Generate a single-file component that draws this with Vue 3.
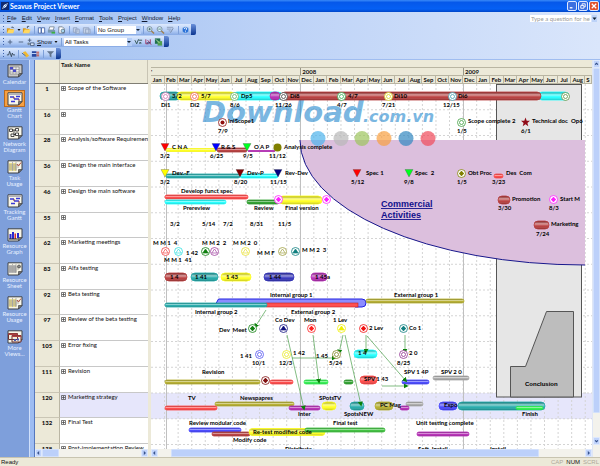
<script setup>
const menus = ['File', 'Edit', 'View', 'Insert', 'Format', 'Tools', 'Project', 'Window', 'Help']

const views = [
  { lines: ['Calendar'], kind: 'calendar' },
  { lines: ['Gantt', 'Chart'], kind: 'gantt', active: true },
  { lines: ['Network', 'Diagram'], kind: 'network' },
  { lines: ['Task', 'Usage'], kind: 'usage' },
  { lines: ['Tracking', 'Gantt'], kind: 'gantt' },
  { lines: ['Resource', 'Graph'], kind: 'graph' },
  { lines: ['Resource', 'Sheet'], kind: 'sheet' },
  { lines: ['Resource', 'Usage'], kind: 'usage' },
  { lines: ['More', 'Views...'], kind: 'more' },
]

const tasks = [
  [1, 'Scope of the Software'],
  [16, ''],
  [28, 'Analysis/software Requirement'],
  [36, 'Design the main interface'],
  [46, 'Design the main software'],
  [55, ''],
  [62, 'Marketing meetings'],
  [83, 'Alfa testing'],
  [92, 'Beta testing'],
  [97, 'Review of the beta testing'],
  [105, 'Error fixing'],
  [111, 'Revision'],
  [120, 'Marketing strategy'],
  [132, 'Final Test'],
  [138, 'Post-implementation Review'],
]

const names = ['Jan', 'Feb', 'Mar', 'Apr', 'May', 'Jun', 'Jul', 'Aug', 'Sep', 'Oct', 'Nov', 'Dec']
const months = Array.from({ length: 32 }, (_, i) => names[i % 12])
const monthLines = Array.from({ length: 32 }, (_, i) => 151 + (i + 1) * 13.57)
const rowLines = Array.from({ length: 14 }, (_, i) => 84 + (i + 1) * 25.75)

const C = {
  teal: '#22aaaa', yellow: '#ffff20', cyan: '#20ffff', brown: '#b83c3c', purple: '#b52cb5',
  red: '#ff4646', green: '#2ba02b', lime: '#30f050', olive: '#b5ae2d', blue: '#4545ff',
  navy: '#3434bc', grey: '#aaaaaa', mid: '#3cc03c',
}
// left, right, centre line, thickness, colour
const bars = [
  [160, 180, 96, 8, 'teal'], [177, 235, 96, 8, 'yellow'], [233, 282, 96, 8, 'cyan'],
  [538, 569, 96, 8, 'cyan'], [281, 541, 96, 8, 'brown'], [270, 280, 96, 8, 'purple'],
  [166, 216, 150, 3, 'yellow'], [217, 247, 150, 4, 'brown'], [248, 275, 151, 1, 'purple'],
  [166, 240, 176, 4, 'teal'], [240, 278, 176, 4, 'cyan'], [494, 503, 176, 4, 'red'],
  [165, 248, 197, 4, 'red'], [165, 226, 202, 4, 'cyan'], [247, 279, 202, 4, 'green'],
  [279, 322, 200, 8, 'yellow'], [498, 510, 200, 8, 'brown'], [534, 549, 225, 8, 'brown'],
  [165, 187, 277, 8, 'brown'], [191, 218, 277, 8, 'teal'], [221, 251, 277, 8, 'yellow'],
  [264, 294, 277, 8, 'navy'], [311, 327, 277, 8, 'purple'],
  [165, 267, 305, 4, 'teal'], [366, 464, 301, 4, 'olive'],
  [354, 377, 354, 8, 'cyan'],
  [165, 260, 382, 4, 'olive'], [270, 293, 382, 4, 'red'], [304, 328, 382, 4, 'lime'],
  [344, 353, 382, 4, 'green'], [360, 377, 380, 8, 'red'], [402, 429, 382, 4, 'blue'],
  [433, 469, 378, 4, 'grey'],
  [215, 294, 404, 4, 'olive'], [165, 217, 408, 4, 'red'], [289, 320, 408, 4, 'purple'],
  [322, 336, 406, 8, 'yellow'], [350, 364, 406, 8, 'teal'], [375, 393, 406, 8, 'olive'],
  [406, 423, 404, 4, 'grey'], [400, 409, 408, 4, 'purple'], [439, 457, 406, 8, 'blue'],
  [458, 545, 406, 8, 'teal'], [516, 543, 408, 3, 'lime'],
  [189, 241, 430, 4, 'blue'], [212, 250, 434, 4, 'brown'], [249, 325, 432, 7, 'yellow'],
  [305, 385, 430, 4, 'mid'], [417, 469, 434, 4, 'purple'],
]

// centre x, centre y, colour, inner shape
const rings = [
  [165, 96, '#d070b0', 'ring'], [194, 96, '#f06050', 'ring'], [234, 96, '#60b060', 'ring'],
  [283, 96, '#404040', 'ring'], [341, 96, '#30b050', 'ring'], [388, 96, '#d8d820', 'ring'],
  [452, 96, '#40a0b0', 'ring'], [565, 96, '#609040', 'ring'],
  [222, 122, '#901010', 'dot'], [461, 122, '#40a040', 'ring'], [461, 173, '#808000', 'plus'],
  [278, 199, '#ff20ff', 'plus'], [326, 199, '#ff20ff', 'plus'], [553, 199, '#ff20ff', 'plus'],
  [165, 251, '#f04040', 'tri'], [178, 251, '#30e0e0', 'tri'], [205, 251, '#108010', 'solid'],
  [214, 251, '#a040a0', 'tri'], [245, 251, '#e8e030', 'tri'], [282, 251, '#a0a040', 'tri'],
  [295, 251, '#108080', 'solid'],
  [252, 328, '#108010', 'plus'], [283, 328, '#101080', 'solid'], [311, 328, '#ff2020', 'plus'],
  [341, 328, '#f0f000', 'solid'], [363, 328, '#f01010', 'plus'], [403, 328, '#108080', 'plus'],
  [259, 354, '#5050f0', 'ring'], [286, 354, '#e8e820', 'ring'], [336, 354, '#808020', 'ring'],
  [403, 354, '#903090', 'ring'], [265, 380, '#801010', 'plus'],
]

const triangles = [
  [165, 147, '#ff0000'], [216, 147, '#0000ff'], [247, 147, '#00ff20'],
  [165, 173, '#ffff00'], [240, 173, '#800000'], [278, 173, '#000080'],
  [357, 173, '#ff0000'], [409, 173, '#00ff20'],
]

const links = [
  [266, 310, 255, 327], [287, 335, 304, 409], [313, 335, 319, 382], [343, 335, 339, 353],
  [345, 335, 361, 405], [366, 335, 366, 352], [367, 336, 406, 381], [405, 335, 405, 352],
  [292, 358, 335, 358], [382, 386, 407, 386],
]

const labels = [
  [172, 98, '3/2'], [201, 98, '5/7'], [241, 98, 'Dp5'], [290, 98, 'Di8'], [348, 98, '4/7'], [394, 98, 'Di10'], [458, 98, 'Di6'],
  [161, 107, 'Di1'], [190, 107, 'Di2'], [230, 107, '8/6'], [275, 107, '11/26'], [337, 107, '4/7'], [382, 107, '7/21'], [443, 107, '12/15'],
  [228, 123, 'IniScope1'], [218, 133, '7/9'], [468, 123, 'Scope complete 2'], [457, 133, '1/5'],
  [532, 123, 'Technical doc'], [571, 123, 'Op6'], [521, 133, '6/1'],
  [172, 149, 'C N A'], [221, 149, 'R & S'], [254, 149, 'O A P'], [284, 149, 'Analysis complete'],
  [160, 158, '3/2'], [210, 158, '6/25'], [243, 158, '9/5'], [269, 158, '11/12'],
  [172, 175, 'Dev.-F'], [247, 175, 'Dev-P'], [285, 175, 'Rev-Dev'],
  [160, 184, '3/2'], [234, 184, '8/20'], [270, 184, '11/15'],
  [366, 175, 'Spec 1'], [351, 184, '5/12'], [415, 175, 'Spec  2'], [404, 184, '9/8'],
  [468, 175, 'Obt Proc'], [506, 175, 'Des  Com'], [457, 184, '1/5'], [492, 184, '3/23'],
  [181, 193, 'Develop funct spec'], [183, 210, 'Prereview'], [254, 210, 'Review'], [285, 210, 'Final version'],
  [512, 201, 'Promotion'], [498, 210, '3/30'], [560, 201, 'Start M'], [549, 210, '8/3'],
  [170, 226, '3/2'], [202, 226, '5/14'], [223, 226, '7/2'], [250, 226, '8/31'], [278, 226, '11/5'],
  [551, 226, 'Marketing'], [536, 236, '7/24'],
  [153, 245, 'M M 1  4'], [202, 245, 'M M 2  2'], [233, 245, 'M M 2  0'], [186, 255, '1 42'],
  [257, 255, 'M M F'], [302, 252, 'M M 2  3'], [164, 262, 'M M 1  41'],
  [170, 279, '1 4'], [195, 279, '1 41'], [226, 279, '1 43'], [269, 279, '1 44'], [315, 279, '1 45a'],
  [270, 297, 'Internal group 1'], [394, 297, 'External group 1'], [195, 314, 'Internal group 2'], [291, 314, 'External group 2'],
  [219, 332, 'Dev  Meet'], [275, 322, 'Co Dev'], [304, 322, 'Mon'], [333, 322, '1 Lev'], [369, 330, '2 Lev'], [409, 330, 'Co 1'],
  [240, 358, '1 41'], [252, 365, '10/1'], [279, 365, '12/3'], [293, 355, '1 42'], [316, 358, '1 45'], [329, 365, '5/24'],
  [358, 355, '1 4'], [409, 355, '2 0'], [397, 365, '8/25'],
  [202, 374, 'Revision'], [364, 381, 'SPV 1 43'], [404, 374, 'SPV 1 4P'], [441, 374, 'SPV 2 0'],
  [188, 400, 'TV'], [240, 400, 'Newspapres'], [298, 416, 'Inter'], [319, 400, 'SPotsTV'], [344, 416, 'SpotsNEW'],
  [380, 407, 'PC Mag'], [444, 407, 'Expo'], [522, 416, 'Finish'],
  [189, 425, 'Review modular code'], [253, 434, 'Re-test modified code'], [233, 442, 'Modify code'],
  [333, 425, 'Final test'], [416, 425, 'Unit testing complete'],
  [285, 451, 'Distribute'], [418, 451, 'Soft. Install'], [490, 451, 'Install'],
]

const dots = [
  [318, '#4db4ec'], [341, '#b8b8b8'], [362, '#9cc45c'], [384, '#f8a040'], [406, '#3088c0'], [428, '#f04858'],
]
</script>

<template>
  <div class="window">
    <header class="titlebar">
      <svg class="app-icon" viewBox="0 0 8 8" aria-hidden="true"><rect width="8" height="8" fill="#102a70" /><path d="M1 7 3 3 7 1 5 5Z" fill="#fff" /><path d="M2 6 6 2" stroke="#6fa0e0" /></svg>
      <h1>Seavus Project Viewer</h1>
      <button class="win" aria-label="Minimize"><svg viewBox="0 0 9 9"><path d="M2 6.5h3" stroke="#fff" stroke-width="1.5" /></svg></button>
      <button class="win" aria-label="Restore"><svg viewBox="0 0 9 9"><path d="M2 4h3.500v3H2zM3.500 4V2H7v3.500H5.500" fill="none" stroke="#fff" /></svg></button>
      <button class="win close" aria-label="Close"><svg viewBox="0 0 9 9"><path d="m2 2 5 5M7 2 2 7" stroke="#fff" stroke-width="1.400" /></svg></button>
    </header>

    <div class="bars">
      <nav class="menubar">
        <i class="grip"></i>
        <button v-for="m in menus" :key="m" class="menu"><u>{{ m[0] }}</u>{{ m.slice(1) }}</button>
        <span class="ask">
          <input class="help" aria-label="Type a question for help" placeholder="Type a question for help" />
          <button class="help-arrow" aria-label="Help list"><svg viewBox="0 0 5 7"><path d="M.5 2.500h4L2.500 5z" fill="#123" /></svg></button>
        </span>
      </nav>

      <div class="toolbar">
        <i class="grip"></i>
        <button class="tool" aria-label="Open"><svg viewBox="0 0 10 10"><path d="M1 8V3h3l1 1h3v4z" fill="#d89a20" /><path d="m1 8.500 2-4h6.500L8 8.500z" fill="#ffd860" /><path d="M6 2q2-1 2.500 1" fill="none" stroke="#345" /></svg></button>
        <button class="caret" aria-label="Open list"><svg viewBox="0 0 6 10"><path d="M1.500 4h3L3 6z" fill="#111" /></svg></button>
        <button class="tool" aria-label="Open folder"><svg viewBox="0 0 10 10"><path d="M1 8V3h3l1 1h3v4z" fill="#d89a20" /><path d="m1 8.500 2-4h6.500L8 8.500z" fill="#ffd860" /><path d="M6 3V1h2" fill="none" stroke="#456" /></svg></button>
        <i class="sep"></i>
        <button class="tool" aria-label="Pages"><svg viewBox="0 0 10 10"><path d="M1.500 2.500h3v6h-3zM5 2.500h3.500v6H5z" fill="#fff" stroke="#4868a8" /></svg></button>
        <button class="tool" aria-label="Print"><svg viewBox="0 0 10 10"><path d="M3 1.500h5L7 5H2z" fill="#fff" stroke="#567" stroke-width=".7" /><path d="M1 5h8v3H1z" fill="#7898b0" /><path d="M5 7h4v2H5z" fill="#3cb040" /></svg></button>
        <button class="tool" aria-label="Print preview"><svg viewBox="0 0 10 10"><path d="M2 1.500h4l2 2v5H2z" fill="#fff" stroke="#456" stroke-width=".7" /><circle cx="6.500" cy="6" r="2" fill="#a8d8f0" stroke="#456" stroke-width=".7" /></svg></button>
        <i class="sep"></i>
        <button class="tool" aria-label="Copy"><svg viewBox="0 0 10 10"><path d="M1.500 2.500h4v5h-4zM4 4h4v5H4z" fill="#c5d3e8" stroke="#94a5c4" /></svg></button>
        <button class="tool" aria-label="Paste"><svg viewBox="0 0 10 10"><path d="M1.500 2.500h6v6h-6zM4 4h5v5H4z" fill="#c5d3e8" stroke="#94a5c4" /></svg></button>
        <i class="sep"></i>
        <span class="combo group"><select aria-label="Group by"><option>No Group</option></select></span>
        <i class="sep"></i>
        <button class="tool" aria-label="Zoom in"><svg viewBox="0 0 10 10"><circle cx="4" cy="4" r="2.700" fill="#dff" stroke="#789" /><path d="m6 6 3 3" stroke="#a08050" stroke-width="1.500" /><path d="M2.500 4h3M4 2.500v3" stroke="#234" stroke-width=".7" /></svg></button>
        <button class="tool" aria-label="Zoom out"><svg viewBox="0 0 10 10"><circle cx="4" cy="4" r="2.700" fill="#dff" stroke="#789" /><path d="m6 6 3 3" stroke="#a08050" stroke-width="1.500" /><path d="M2.500 4h3" stroke="#234" stroke-width=".7" /></svg></button>
        <button class="tool" aria-label="Go to task"><svg viewBox="0 0 10 10"><path d="M1 2h7M1 4h5M3 6h2" stroke="#8a9ab5" /><path d="m8 3-3 5" stroke="#74859f" /></svg></button>
        <i class="sep"></i>
        <button class="tool" aria-label="Help"><svg viewBox="0 0 10 10"><circle cx="5" cy="5" r="3.700" fill="#2870d8" stroke="#cde" stroke-width=".6" /><path d="M3.700 4q0-1.500 1.500-1.500T6 4.500L5 5.500M5 6.500v1" fill="none" stroke="#fff" /></svg></button>
        <i class="cap"></i>
      </div>

      <div class="toolbar">
        <i class="grip"></i>
        <button class="tool" aria-label="Expand"><svg viewBox="0 0 10 10"><path d="M2 5h5M4.500 2.500v5" stroke="#4c6080" /></svg></button>
        <button class="tool" aria-label="Collapse"><svg viewBox="0 0 10 10"><path d="M3 5h5" stroke="#4c6080" /></svg></button>
        <button class="tool" aria-label="Subtasks"><svg viewBox="0 0 10 10"><path d="M2 3h4M4 1v4M5 6h4v3H5z" stroke="#4c6080" fill="#dce8f8" /><circle cx="3" cy="7" r="1.500" fill="#789" /></svg></button>
        <button class="menu show"><u>S</u>how</button>
        <button class="caret" aria-label="Show list"><svg viewBox="0 0 6 10"><path d="M1.500 4h3L3 6z" fill="#111" /></svg></button>
        <i class="sep"></i>
        <span class="combo filter"><select aria-label="Filter"><option>All Tasks</option></select></span>
        <button class="tool" aria-label="Auto filter"><svg viewBox="0 0 10 10"><path d="m1 3 2 4 2-5M5 3h4M6 5l2 2M8 5 6 7" fill="none" stroke="#2e5050" /></svg></button>
        <button class="tool" aria-label="Sort"><svg viewBox="0 0 10 10"><path d="M2 2v5h3M4 3l4 5M7 2v4" fill="none" stroke="#a03060" /><path d="M3 6h4" stroke="#225" /></svg></button>
        <button class="tool" aria-label="Export"><svg viewBox="0 0 10 10"><path d="M1 1h6v6H1z" fill="#207050" /><path d="M4 4h5v5H4z" fill="#50a050" /><path d="m2 2 4 4" stroke="#bfe0b0" /></svg></button>
        <i class="cap"></i>
      </div>

      <div class="toolbar">
        <i class="grip"></i>
        <button class="tool" aria-label="Activity"><svg viewBox="0 0 10 10"><path d="M1 6h2l1-4 2 6 1-4 1 2h2" fill="none" stroke="#345" /></svg></button>
        <i class="sep"></i>
        <button class="tool" aria-label="Highlight"><svg viewBox="0 0 10 10"><path d="m2 3 3-1 4 5-3 2z" fill="#f0b830" /><path d="M1 4 5 7" stroke="#406090" /></svg></button>
        <button class="tool" aria-label="Columns"><svg viewBox="0 0 10 10"><path d="M1 2h5v2H1zM1 5h5v3H1z" fill="#2848a0" /><path d="M6 3h3M6 5h3M6 7h3" stroke="#c83820" /></svg></button>
        <i class="sep"></i>
        <button class="tool" aria-label="Filter tasks"><svg viewBox="0 0 10 10"><path d="M1 2h8L6 5v4L4 7.500V5z" fill="#62748c" /></svg></button>
        <i class="cap"></i>
      </div>
    </div>

    <main class="work">
      <aside class="sidebar">
        <button v-for="(v, i) in views" :key="i" class="view">
          <span class="view-icon" :class="{ active: v.active }">
            <svg viewBox="0 0 16 14">
              <path d="M1 .8h14v8.700L11.500 13H1z" :fill="v.kind === 'calendar' ? '#c8c8c8' : '#f8f6e8'" stroke="#3c4048" />
              <path d="M15 9.500h-3.500V13z" fill="#777" stroke="#333" stroke-width=".6" />
              <g v-if="v.kind === 'calendar'"><path d="M3 3h9v7H3z" fill="#efefef" stroke="#777" stroke-width=".6" /><path d="M3 5.500h9M3 8h9M6 3v7M9 3v7" stroke="#888" stroke-width=".6" /><path d="M6 5.500h3V8H6zM3 3h3v2.500H3z" fill="#4848c8" /></g>
              <g v-else-if="v.kind === 'gantt'"><path d="M1.500 1.300h13V3h-13z" fill="#b0b0b8" /><path d="M3 5h4M7 7h5M4 9.500h4M9 4.500h4" stroke="#3838d8" stroke-width="1.500" /><path d="M7 5v2M12 7v2" stroke="#803040" /></g>
              <g v-else-if="v.kind === 'network'" fill="#fff" stroke="#222" stroke-width=".8"><path d="M2.500 3h3v2.500h-3zM8.500 2.500h3V5h-3zM8.500 7h3v2.500h-3zM4 8h3v2.500H4zM5.500 4h3M7 4v4.500h2" /></g>
              <g v-else-if="v.kind === 'graph'"><path d="M2.500 6h2v5h-2zM5 4h2v7H5zM10 5h2v5h-2z" fill="#2828d0" /><path d="M7.500 5.500H9V11H7.500z" fill="#d83030" /><path d="M2 11h9" stroke="#222" /></g>
              <g v-else-if="v.kind === 'more'"><path d="M1.500 3.500h9v6h-9zM5 5.500h9V12H5z" fill="#f4efdc" stroke="#6c3030" /><path d="M1.500 3.500h9V5h-9zM5 5.500h9V7H5z" fill="#b04040" /><path d="M7 9h2v2H7zM10 8.500h2v2h-2z" fill="#4858b0" /></g>
              <g v-else><path d="M2 3h3v8H2zM6 3h3v8H6z" :fill="v.kind === 'usage' ? '#e8dc90' : '#b8b8b8'" /><path d="M2 5h10M2 7h10M2 9h8M5.500 2v9M9 2v9" stroke="#888" stroke-width=".6" /><path v-if="v.kind === 'usage'" d="m10 4 1.500 2L14 2.500" fill="none" stroke="#b05040" /><circle v-else cx="12" cy="4.500" r="1.500" fill="#888" stroke="#333" stroke-width=".6" /></g>
            </svg>
          </span>
          <span v-for="l in v.lines" :key="l" class="view-line">{{ l }}</span>
        </button>
      </aside>

      <section class="table-pane">
        <table>
          <thead><tr><th aria-label="ID"></th><th>Task Name</th></tr></thead>
          <tbody>
            <tr v-for="[id, name] in tasks" :key="id" :class="{ selected: id === 120 }">
              <th scope="row">{{ id }}</th>
              <td><svg class="plus" viewBox="0 0 5 5" aria-hidden="true"><path d="M.5.5h4v4h-4zM1 2.500h3M2.500 1v3" fill="none" stroke="#444" stroke-width=".7" /></svg>{{ name }}</td>
            </tr>
          </tbody>
        </table>
        <div class="hscroll">
          <button aria-label="Scroll left"><svg viewBox="0 0 7 7"><path d="M4.500 1.500 2.500 3.500l2 2" /></svg></button>
          <i class="thumb short"></i><i class="track"></i>
          <button aria-label="Scroll right"><svg viewBox="0 0 7 7"><path d="m2.500 1.500 2 2-2 2" /></svg></button>
        </div>
      </section>

      <section class="chart-pane">
        <div class="scale">
          <div class="band"><span></span></div>
          <div class="band"><span>'</span><span class="y2008">2008</span><span class="y2009">2009</span></div>
          <div class="band"><span v-for="(m, i) in months" :key="i" class="month">{{ m }}</span><span class="month">S</span></div>
        </div>
        <div class="canvas">
          <svg viewBox="151 84 441 365" preserveAspectRatio="xMinYMin meet" role="img" aria-label="Project timeline">
            <defs>
              <linearGradient id="gloss" x2="0" y2="1">
                <stop offset="0" stop-color="#000" stop-opacity=".25" />
                <stop offset=".35" stop-color="#fff" stop-opacity=".5" />
                <stop offset=".65" stop-color="#fff" stop-opacity="0" />
                <stop offset="1" stop-color="#000" stop-opacity=".35" />
              </linearGradient>
              <marker id="arrow" viewBox="0 0 6 6" refX="4" refY="3" markerWidth="5" markerHeight="5" orient="auto" markerUnits="userSpaceOnUse"><path d="M0 0 6 3 0 6z" fill="#0a800a" /></marker>
            </defs>

            <rect x="151" y="393" width="441" height="26" fill="#e6e6fb" />
            <g class="grid">
              <line v-for="x in monthLines" :key="x" :x1="x" :x2="x" y1="84" y2="449" />
              <line v-for="y in rowLines" :key="y" x1="151" x2="592" :y1="y" :y2="y" />
            </g>
            <path d="M166.500 84v365M300.500 84v365M463.500 84v365" stroke="#c0c0c0" />

            <rect x="496.500" y="84.500" width="85" height="312.500" fill="#e6e6e6" stroke="#555" />
            <path d="M510.500 397V366.500h15L546.500 311.500h27V397z" fill="#bdbdbd" stroke="#555" />
            <path d="M300 140H585V265A285 125 0 0 1 300 140Z" fill="#dcbfdd" />
            <path d="M585 265A285 125 0 0 1 300 140" fill="none" stroke="#18188c" />

            <g class="brand">
              <text x="202" y="122" class="brand-big">Download</text>
              <text x="363" y="122" class="brand-small">.com.vn</text>
            </g>
            <circle v-for="[x, c] in dots" :key="x" :cx="x" cy="138.500" r="7.500" :fill="c" opacity=".7" />

            <g>
              <path d="M216 303.500 218.500 299H362q4 0 4 4t-4 4H355V303.500Z" fill="#8c8cff" stroke="#2020e0" />
              <rect x="266" y="303" width="92" height="4" fill="#ff5050" stroke="#c02020" stroke-width=".6" />
            </g>

            <g v-for="(b, i) in bars" :key="'b' + i">
              <rect :x="b[0]" :y="b[2] - b[3] / 2" :width="b[1] - b[0]" :height="b[3]" :rx="b[3] / 2" :fill="C[b[4]]" />
              <rect :x="b[0]" :y="b[2] - b[3] / 2" :width="b[1] - b[0]" :height="b[3]" :rx="b[3] / 2" fill="url(#gloss)" :stroke="C[b[4]]" stroke-width=".8" />
            </g>

            <path v-for="(t, i) in triangles" :key="'t' + i" :d="`M${t[0] - 4} ${t[1] - 3.5}h8l-4 7.500z`" :fill="t[2]" stroke="#444" stroke-width=".3" />
            <circle cx="277.500" cy="147.500" r="4" fill="#808000" />
            <path d="m525.500 117.500 1.200 3.200 3.300.1-2.600 2.100.9 3.300-2.800-1.900-2.800 1.900.9-3.300-2.600-2.100 3.300-.1z" fill="#900c18" />

            <line v-for="(l, i) in links" :key="'l' + i" :x1="l[0]" :y1="l[1]" :x2="l[2]" :y2="l[3]" class="link" />

            <g v-for="(r, i) in rings" :key="'r' + i" :transform="`translate(${r[0] + .5} ${r[1] + .5})`">
              <circle r="4" fill="#fff" :stroke="r[2]" stroke-width=".8" />
              <circle v-if="r[3] === 'ring'" r="2" fill="none" :stroke="r[2]" stroke-width=".8" />
              <circle v-else-if="r[3] === 'dot'" r="2" :fill="r[2]" />
              <path v-else-if="r[3] === 'plus'" d="M0-2.700 2.700 0 0 2.700-2.700 0z" :fill="r[2]" />
              <path v-else d="M0-2.500 2.700 1.500H-2.700z" :fill="r[3] === 'solid' ? r[2] : 'none'" :stroke="r[2]" stroke-width=".7" />
            </g>

            <g class="labels">
              <text v-for="(t, i) in labels" :key="'x' + i" :x="t[0]" :y="t[1]">{{ t[2] }}</text>
            </g>
            <text x="525" y="386" class="conclusion">Conclusion</text>
            <g class="commercial">
              <text x="381" y="207">Commercial</text>
              <text x="381" y="218">Activities</text>
            </g>
          </svg>
        </div>
        <div class="hscroll">
          <button aria-label="Scroll chart left"><svg viewBox="0 0 7 7"><path d="M4.500 1.500 2.500 3.500l2 2" /></svg></button>
          <i class="gap"></i><i class="thumb long"></i><i class="track"></i>
          <button aria-label="Scroll chart right"><svg viewBox="0 0 7 7"><path d="m2.500 1.500 2 2-2 2" /></svg></button>
        </div>
      </section>

      <div class="vscroll">
        <button aria-label="Scroll up"><svg viewBox="0 0 7 7"><path d="m1.500 4.500 2-2 2 2" /></svg></button>
        <i class="thumb"></i><i class="track"></i>
        <button aria-label="Scroll down"><svg viewBox="0 0 7 7"><path d="m1.500 2.500 2 2 2-2" /></svg></button>
      </div>
    </main>

    <footer class="status"><span class="ready">Ready</span><span class="off">CAP</span><span>NUM</span><span class="off">SCRL</span></footer>
  </div>
</template>

<style>
html, body { margin: 0; background: #ece9d8; }
</style>

<style scoped>
* { box-sizing: border-box; }
.window { display: flex; flex-direction: column; height: 100vh; font: 6px/8px "Liberation Sans", Arial, sans-serif; color: #111; overflow: hidden; }
button, input, select { font: inherit; color: inherit; border: 0; padding: 0; margin: 0; background: none; border-radius: 0; }
svg { display: block; }

.titlebar { flex: none; height: 12px; display: flex; align-items: center; gap: 1px; padding: 0 1px; background: linear-gradient(#3a8af8, #0558ea 20%, #0560f4 75%, #0046c8); }
.app-icon { width: 8px; height: 8px; }
h1 { flex: 1; margin: 0; font: bold 7px/12px "Open Sans", sans-serif; font-family: Lato, sans-serif; color: #fff; }
.win { width: 10px; height: 10px; border: 1px solid #dce8ff; border-radius: 2px; background: #3c70e0; }
.win svg { width: 8px; height: 8px; }
.close { background: #e0522c; }

.bars { flex: none; height: 48px; background: linear-gradient(90deg, #9fbff0, #bcd2f7 45%, #dae6fb); border-bottom: 1px solid #a0bdf0; }
.menubar { display: flex; align-items: center; height: 12px; gap: 5px; padding: 0 3px 0 2px; }
.grip { flex: none; width: 1px; height: 7px; margin: 0 2px 0 1px; background: repeating-linear-gradient(#3f62ac 0 1px, transparent 1px 3px); }
.menubar .grip { margin-right: -2px; }
.menu { color: #101830; }
.ask { display: flex; gap: 1px; margin-left: auto; padding-top: 1px; }
.help { width: 61px; height: 7px; background: #fff; padding: 0 1px; font-family: Lato, sans-serif; }
.help::placeholder { color: #999; opacity: 1; }
.help-arrow { width: 5px; height: 7px; background: #bdd3f8; }
.toolbar { display: flex; align-items: center; width: max-content; height: 11px; margin-bottom: 1px; padding-left: 2px; background: linear-gradient(#dde9fd, #b4cdf6 60%, #86a9e4); border-radius: 0 2px 2px 0; }
.tool { width: 10px; height: 10px; }
.tool svg { width: 9px; height: 10px; }
.caret { width: 6px; height: 10px; }
.show { margin: 0 1px; }
.sep { width: 1px; height: 8px; margin: 0 2px; background: #7d9fd8; }
.cap { align-self: stretch; width: 5px; border-radius: 0 2px 2px 0; background: linear-gradient(#6a90da, #0c3690); }
.combo { display: grid; align-items: center; height: 8px; background: linear-gradient(90deg, transparent calc(100% - 5px), #b4cdf6 0), #fff; }
.combo select { grid-area: 1 / 1; appearance: none; width: 100%; height: 8px; padding-left: 1px; }
.combo::after { content: ""; grid-area: 1 / 1; justify-self: end; margin-right: 1px; border: solid transparent; border-width: 2px 2px 0; border-top-color: #123; pointer-events: none; }
.group { width: 44px; }
.filter { width: 68px; margin-right: 2px; }

.work { flex: 1; min-height: 0; display: flex; background: #ece9d8; }
.sidebar { flex: none; width: 35px; display: flex; flex-direction: column; gap: 5px; padding: 2px 5px 0 0; background: #7e9fdb; border-right: 1px solid #5577bd; box-shadow: inset -4px 0 #9dbcf2, inset -5px 0 #d0e0fb; }
.view { display: flex; flex-direction: column; align-items: center; color: #e8f0ff; line-height: 6px; font-family: Lato, sans-serif; }
.view-icon { display: grid; place-items: center; width: 21px; height: 17px; }
.active { background: #f8a040; border: 1px solid #b86a20; }
.view-icon svg { width: 16px; height: 14px; }
.view-line { height: 6px; }

.table-pane { flex: none; width: 113px; min-height: 0; display: flex; flex-direction: column; overflow: hidden; }
table { flex: 1; min-height: 0; display: flex; flex-direction: column; width: 113px; overflow: hidden; font: 6px/8px Lato, sans-serif; }
tr { display: grid; grid-template-columns: 25px 1fr; }
thead { flex: none; }
thead tr { height: 24px; border-bottom: 1px solid #807e74; }
thead th { text-align: left; padding: 1px; background: #ece9d8; border-right: 1px solid #c8c4b4; }
tbody { flex: 1; min-height: 0; display: grid; grid-template-rows: repeat(14, minmax(0, 1fr)) 5px; }
tbody tr { overflow: hidden; min-height: 0; }
tbody th { background: #ece9d8; border-right: 1px solid #bab6a4; border-bottom: 1px solid #cac6b5; font-weight: 900; }
td { display: flex; align-items: flex-start; gap: 2px; padding: 0 0 0 1px; background: #fff; border-bottom: 1px solid #c8c8c8; white-space: nowrap; overflow: hidden; }
.selected td { background: #e6e6fb; }
.plus { flex: none; width: 5px; height: 5px; margin-top: 2px; }

.hscroll { flex: none; height: 8px; display: flex; background: #f3f2ec; }
.hscroll button, .vscroll button { flex: none; width: 7px; height: 8px; background: #c0d3fb; border: 1px solid #dde8fd; border-radius: 1px; }
.hscroll button svg, .vscroll button svg { width: 5px; height: 6px; fill: none; stroke: #304c88; stroke-width: 1.500; }
.thumb { background: #bcd0fa; border: 1px solid #d2e0fc; border-radius: 1px; }
.short { width: 17px; }
.gap { width: 13px; }
.long { flex: 8; }
.track { flex: 1; }

.chart-pane { flex: 1; min-width: 0; display: flex; flex-direction: column; margin-left: 3px; }
.scale { flex: none; height: 24px; display: grid; grid-template-rows: repeat(3, 8px); font: bold 6px/8px Lato, sans-serif; overflow: hidden; }
.band { display: grid; grid-template-columns: repeat(32, minmax(0, 1fr)) 7px; border-bottom: 1px solid #b9b5a2; overflow: hidden; }
.y2008 { grid-column: 12 / span 12; border-left: 1px solid #999687; padding-left: 1px; }
.y2009 { grid-column: 24 / -1; border-left: 1px solid #999687; padding-left: 1px; }
.month { text-align: center; border-right: 1px solid #b9b5a2; overflow: hidden; }
.canvas { flex: 1; min-height: 0; overflow: hidden; background: #fff; }
.canvas svg { width: 100%; }
.grid line { stroke: #d4d4d4; stroke-width: 1; stroke-dasharray: 2 2; }
.link { stroke: #4ca04c; stroke-width: .7; marker-end: url(#arrow); }
.labels { font: 700 6px Lato, sans-serif; fill: #000; }
.labels text { white-space: pre; }
.brand { font: italic bold 29px "DejaVu Sans", sans-serif; fill: #2a8cd0; opacity: .62; }
.brand-small { font-size: 16px; }
.conclusion { font: bold 6px "Liberation Sans", sans-serif; }
.commercial { font: bold 9px "Liberation Sans", sans-serif; fill: #10108c; text-decoration: underline; }

.vscroll { flex: none; width: 8px; display: flex; flex-direction: column; padding-bottom: 12px; background: #f3f2ec; border-left: 1px solid #dfe6f5; }
.vscroll .thumb { flex: 14; }

.status { flex: none; height: 9px; display: flex; gap: 3px; padding: 0 1px; background: #ece9d8; border-top: 1px solid #c8c4b0; }
.ready { flex: 1; }
.off { color: #aca899; }
</style>
